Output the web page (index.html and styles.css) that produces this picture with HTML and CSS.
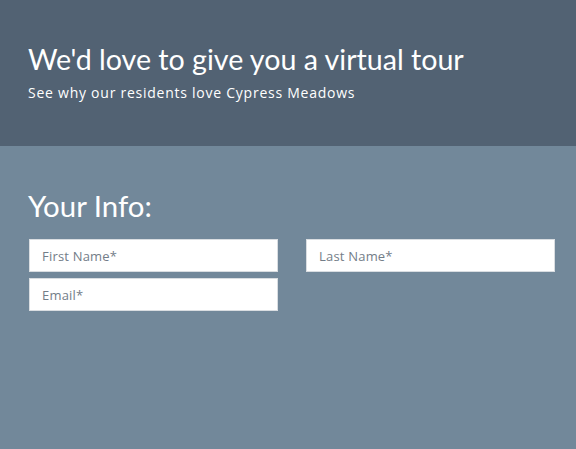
FILE: index.html
```html
<!DOCTYPE html>
<html lang="en">
<head>
    <meta charset="UTF-8">
    <meta name="viewport" content="width=device-width, initial-scale=1.0">
    <title>Virtual Tour</title>
    <link rel="stylesheet" href="styles.css">
</head>
<body>
    <div class="tour-header">
        <h1>We'd love to give you a virtual tour</h1>
        <p>See why our residents love Cypress Meadows</p>
    </div>

    <div class="tour-form">
        <h2>Your Info:</h2>
        <form id="tourForm" class="form-grid">
            <input type="text" name="firstName" placeholder="First Name*" required>
            <input type="text" name="lastName" placeholder="Last Name*" required>
            <input type="email" name="email" placeholder="Email*" required>
        </form>
    </div>
</body>
</html>
```

FILE: styles.css
```css
* {
    margin: 0;
    padding: 0;
    box-sizing: border-box;
}

body {
    min-height: 100vh;
    background-color: #72889a;
    font-family: 'Open Sans', sans-serif;
}

.tour-header {
    background-color: #526273;
    height: 146px;
    padding: 41px 28px 0;
    color: #fff;
}

.tour-header h1 {
    font-family: Lato, sans-serif;
    font-weight: 400;
    font-size: 28.6px;
    line-height: 36px;
    margin-bottom: 7px;
}

.tour-header p {
    font-size: 14px;
    line-height: 18px;
    letter-spacing: 0.75px;
}

.tour-form {
    padding: 42px 21px 0 28px;
}

.tour-form h2 {
    font-family: Lato, sans-serif;
    font-weight: 400;
    font-size: 29.4px;
    line-height: 36px;
    color: #fff;
    margin-bottom: 15px;
}

.form-grid {
    display: grid;
    grid-template-columns: 249px 249px;
    column-gap: 28px;
    row-gap: 6px;
    padding-left: 1px;
}

.form-grid input {
    height: 33px;
    border: 1px solid #d9dde1;
    background: #fff;
    padding: 0 12px;
    font-family: 'Open Sans', sans-serif;
    font-size: 13px;
    letter-spacing: 0.2px;
    color: #333;
    outline: none;
}

.form-grid input::placeholder {
    color: #737d88;
}
```
